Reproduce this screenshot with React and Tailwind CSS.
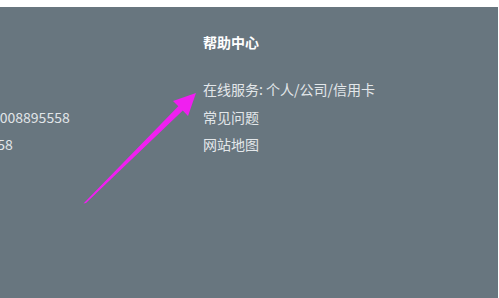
import React from 'react';

// Pie de página: columna de contacto (recortada a la izquierda) y "帮助中心"
const links = ['在线服务: 个人/公司/信用卡', '常见问题', '网站地图'];

const App = () => {
  return (
    <div className="w-[499px] h-[298px] bg-white pt-[7px] pr-px" style={{ fontFamily: '"Noto Sans CJK SC", "Noto Sans", sans-serif' }}>
      <div className="relative h-full bg-[#68767f] overflow-hidden flex pt-[25px] text-[14px]">
        {/* Columna izquierda, casi fuera de la vista */}
        <div className="w-[283px] shrink-0 ml-[-80px]">
          <div className="h-[20px]" />
          <ul className="mt-[24px] leading-[27.5px] text-[#e1e5e8] whitespace-nowrap">
            <li className="h-[27.5px]" />
            <li><span className="inline-block w-[72px]">客服热线：</span>4008895558</li>
            <li><span className="inline-block w-[54px]">信用卡：</span>95558</li>
          </ul>
        </div>

        {/* Centro de ayuda */}
        <div>
          <div className="leading-[20px] font-bold text-white">帮助中心</div>
          <ul className="mt-[24px] leading-[27.5px] text-[#e3e7ea] whitespace-nowrap">
            {links.map((l) => (
              <li key={l}>{l}</li>
            ))}
          </ul>
        </div>

        {/* Flecha de anotación */}
        <svg className="absolute left-0 top-[-7px] pointer-events-none" width="499" height="298" viewBox="0 0 499 298">
          <polygon
            points="83.5,203.5 178.3,106.2 173,101 196,93 188,116 182.8,110.6 86,203"
            fill="#f01ff0"
          />
        </svg>
      </div>
    </div>
  );
};

export default App;
